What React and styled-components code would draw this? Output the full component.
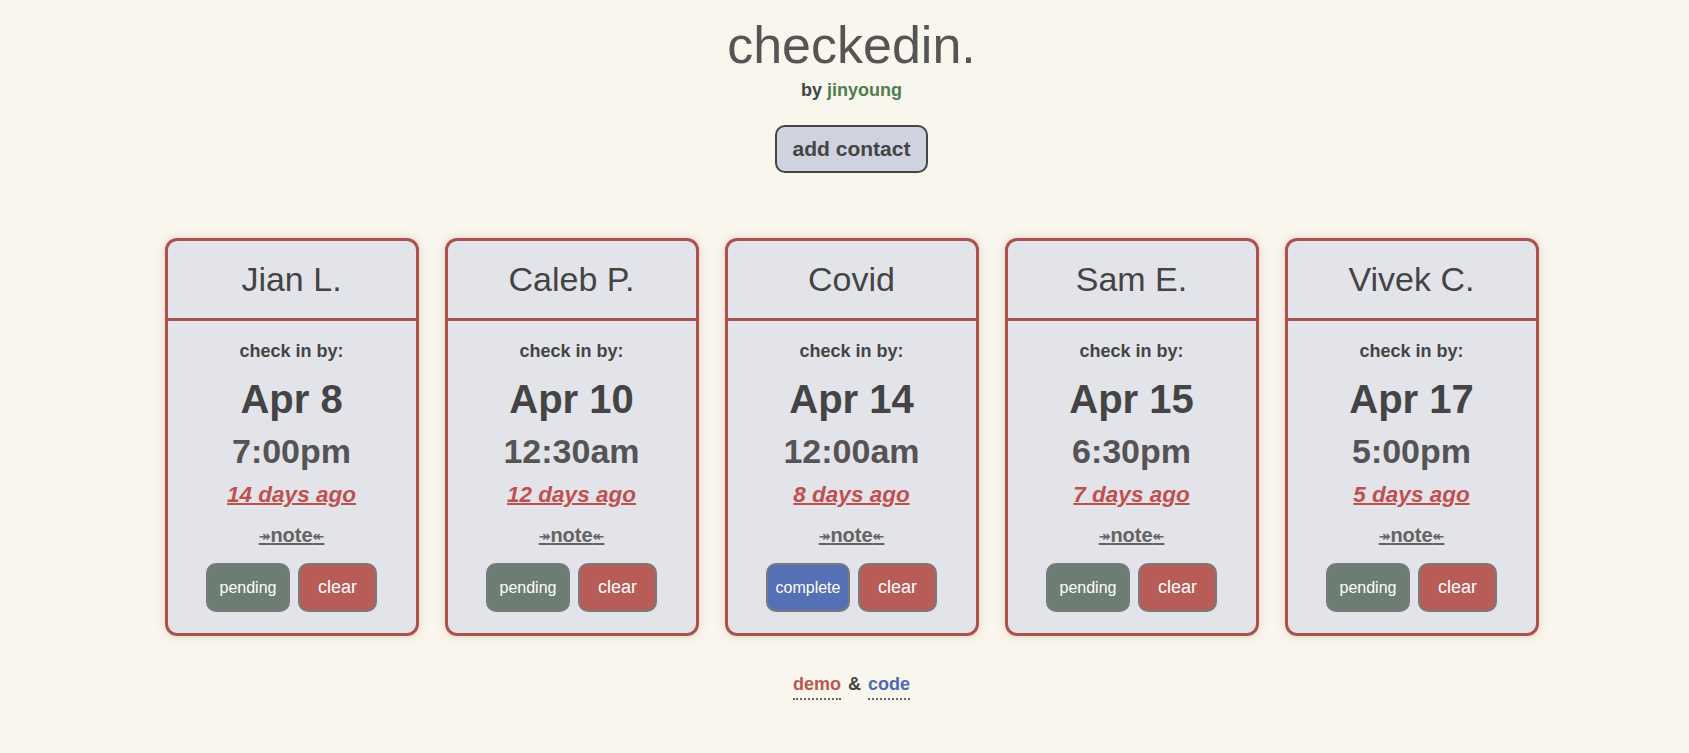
import React from "react";
import styled, { createGlobalStyle } from "styled-components";

const contacts = [
  { name: "Jian L.", date: "Apr 8", time: "7:00pm", ago: "14 days ago", status: "pending" },
  { name: "Caleb P.", date: "Apr 10", time: "12:30am", ago: "12 days ago", status: "pending" },
  { name: "Covid", date: "Apr 14", time: "12:00am", ago: "8 days ago", status: "complete" },
  { name: "Sam E.", date: "Apr 15", time: "6:30pm", ago: "7 days ago", status: "pending" },
  { name: "Vivek C.", date: "Apr 17", time: "5:00pm", ago: "5 days ago", status: "pending" },
];

const App = () => {
  return (
    <Page>
      <GlobalStyle />
      <Title>checkedin.</Title>
      <Byline>
        by <Green>jinyoung</Green>
      </Byline>
      <AddButton>add contact</AddButton>
      <Cards>
        {contacts.map((c) => (
          <Card key={c.name}>
            <CardHead>{c.name}</CardHead>
            <CardBody>
              <Label>check in by:</Label>
              <DateText>{c.date}</DateText>
              <TimeText>{c.time}</TimeText>
              <Ago>{c.ago}</Ago>
              <Note>
                <Arrow>↠</Arrow>note<Arrow>↞</Arrow>
              </Note>
              <Actions>
                <StatusButton complete={c.status === "complete"}>{c.status}</StatusButton>
                <ClearButton>clear</ClearButton>
              </Actions>
            </CardBody>
          </Card>
        ))}
      </Cards>
      <Footer>
        <FootLink color="#bd5550">demo</FootLink>
        <Amp>&amp;</Amp>
        <FootLink color="#4a69b8">code</FootLink>
      </Footer>
    </Page>
  );
};

export default App;

const GlobalStyle = createGlobalStyle`
  html, body {
    margin: 0;
    padding: 0;
    background: #f9f6ee;
  }
  body {
    font-family: "Liberation Sans", Arial, Helvetica, sans-serif;
  }
`;

const Page = styled.div`
  min-height: 753px;
  box-sizing: border-box;
  padding: 15px 0 0 14px;
  display: flex;
  flex-direction: column;
  align-items: center;
  background: #f9f6ee;
`;

const Title = styled.h1`
  margin: 0;
  font-size: 52px;
  font-weight: 400;
  line-height: 60px;
  color: #555555;
`;

const Byline = styled.div`
  margin-top: 5px;
  font-size: 18px;
  font-weight: 700;
  line-height: 21px;
  color: #444444;
`;

const Green = styled.span`
  color: #4f7d4f;
`;

const AddButton = styled.button`
  margin-top: 24px;
  width: 153px;
  height: 48px;
  border: 2px solid #444444;
  border-radius: 10px;
  background: #cfd3e0;
  color: #444444;
  font-family: "Liberation Sans", Arial, sans-serif;
  font-size: 21px;
  font-weight: 700;
  padding: 0;
`;

const Cards = styled.div`
  margin-top: 65px;
  display: flex;
  gap: 26px;
`;

const Card = styled.div`
  width: 254px;
  box-sizing: border-box;
  border: 3px solid #a9524f;
  border-radius: 12px;
  background: #e3e4ea;
  box-shadow: 0 0 10px rgba(225, 170, 130, 0.45);
  overflow: hidden;
`;

const CardHead = styled.div`
  height: 77px;
  border-bottom: 3px solid #a9524f;
  display: flex;
  align-items: center;
  justify-content: center;
  font-size: 34px;
  color: #444444;
`;

const CardBody = styled.div`
  display: flex;
  flex-direction: column;
  align-items: center;
  padding: 20px 0 21px;
`;

const Label = styled.div`
  font-size: 18px;
  font-weight: 700;
  line-height: 21px;
  color: #444444;
`;

const DateText = styled.div`
  margin-top: 14px;
  font-size: 40px;
  font-weight: 700;
  line-height: 46px;
  color: #444444;
`;

const TimeText = styled.div`
  margin-top: 10px;
  font-size: 34px;
  font-weight: 700;
  line-height: 39px;
  color: #555353;
`;

const Ago = styled.a`
  margin-top: 11px;
  font-size: 22.5px;
  font-weight: 700;
  font-style: italic;
  line-height: 25px;
  color: #c0504d;
  text-decoration: underline;
  text-decoration-thickness: 2px;
`;

const Note = styled.a`
  margin-top: 17px;
  font-size: 20px;
  font-weight: 700;
  line-height: 22px;
  color: #666262;
  text-decoration: underline;
  text-decoration-thickness: 2px;
`;

const Arrow = styled.span`
  font-family: "DejaVu Sans", sans-serif;
  font-size: 14px;
  vertical-align: 1px;
`;

const Actions = styled.div`
  margin-top: 16px;
  display: flex;
  gap: 8px;
`;

const BaseButton = styled.button`
  height: 49px;
  box-sizing: border-box;
  border: 2px solid #7a7a7a;
  border-radius: 10px;
  color: #ffffff;
  font-family: "Liberation Sans", Arial, sans-serif;
  padding: 0;
`;

const StatusButton = styled(BaseButton).withConfig({
  shouldForwardProp: (p) => p !== "complete",
})`
  width: 84px;
  font-size: 16px;
  background: ${(p) => (p.complete ? "#5570b4" : "#6c7e73")};
`;

const ClearButton = styled(BaseButton)`
  width: 79px;
  font-size: 18px;
  background: #b85c57;
`;

const Footer = styled.div`
  margin-top: 38px;
  display: flex;
  gap: 7px;
  font-size: 18px;
  font-weight: 700;
  line-height: 21px;
`;

const FootLink = styled.span`
  color: ${(p) => p.color};
  border-bottom: 2px dotted #666666;
  padding-bottom: 3px;
`;

const Amp = styled.span`
  color: #444444;
`;
